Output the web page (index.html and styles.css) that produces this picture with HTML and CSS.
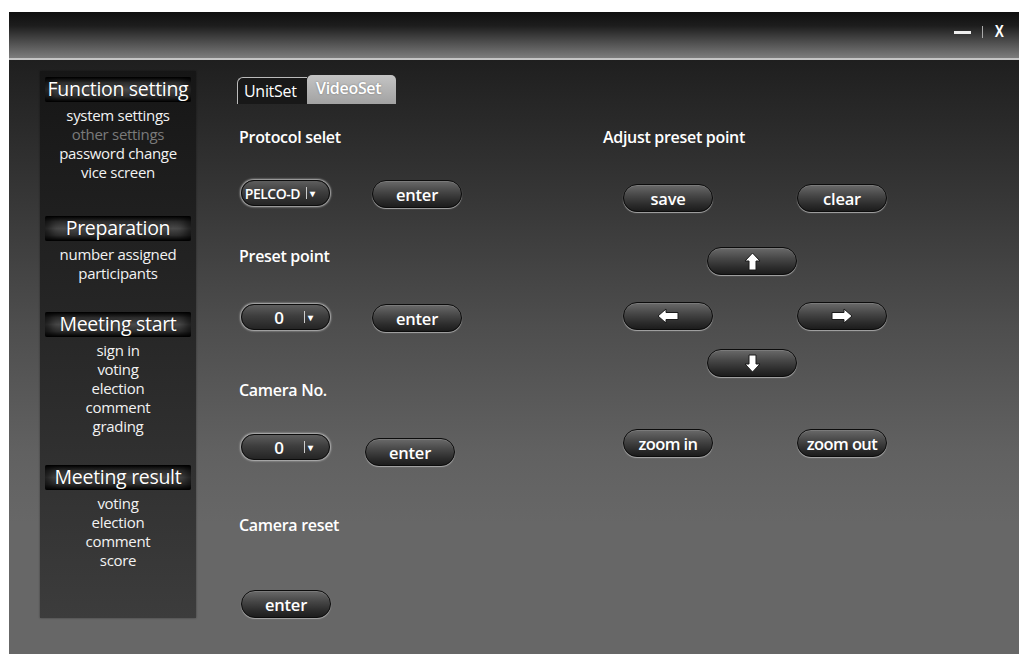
FILE: index.html
```html
<!DOCTYPE html>
<html lang="en">
<head>
  <meta charset="UTF-8" />
  <title>VideoSet</title>
  <link rel="stylesheet" href="styles.css">
</head>
<body>
  <div class="window">
    <div class="titlebar">
      <span class="tb-min"></span>
      <span class="tb-sep"></span>
      <span class="tb-close">X</span>
    </div>

    <div class="main">
      <nav class="sidebar">
        <div class="section">
          <div class="section-head">Function setting</div>
          <a href="#">system settings</a>
          <a href="#" class="disabled">other settings</a>
          <a href="#">password change</a>
          <a href="#">vice screen</a>
        </div>
        <div class="section s2">
          <div class="section-head">Preparation</div>
          <a href="#">number assigned</a>
          <a href="#">participants</a>
        </div>
        <div class="section s3">
          <div class="section-head">Meeting start</div>
          <a href="#">sign in</a>
          <a href="#">voting</a>
          <a href="#">election</a>
          <a href="#">comment</a>
          <a href="#">grading</a>
        </div>
        <div class="section s4">
          <div class="section-head">Meeting result</div>
          <a href="#">voting</a>
          <a href="#">election</a>
          <a href="#">comment</a>
          <a href="#">score</a>
        </div>
      </nav>

      <div class="content">
        <div class="tabs">
          <span class="tab">UnitSet</span>
          <span class="tab active">VideoSet</span>
        </div>

        <div class="columns">
          <div class="col-left">
            <div class="label">Protocol selet</div>
            <div class="row r1">
              <div class="select wide"><span class="val">PELCO-D</span><span class="bar"></span><span class="tri">&#9662;</span></div>
              <button class="btn">enter</button>
            </div>

            <div class="label l2">Preset point</div>
            <div class="row r2">
              <div class="select"><span class="val">0</span><span class="bar"></span><span class="tri">&#9662;</span></div>
              <button class="btn">enter</button>
            </div>

            <div class="label l3">Camera No.</div>
            <div class="row r3">
              <div class="select"><span class="val">0</span><span class="bar"></span><span class="tri">&#9662;</span></div>
              <button class="btn low">enter</button>
            </div>

            <div class="label l4">Camera reset</div>
            <div class="row r4">
              <button class="btn">enter</button>
            </div>
          </div>

          <div class="col-right">
            <div class="label">Adjust preset point</div>
            <div class="pad p1">
              <button class="btn">save</button>
              <button class="btn">clear</button>
            </div>
            <div class="pad p2 center">
              <button class="btn">
                <svg width="17" height="19" viewBox="0 0 17 19"><path d="M8.5 1 L16 9 L12 9 L12 18 L5 18 L5 9 L1 9 Z" fill="#fff" stroke="#1a1a1a" stroke-width="1"/></svg>
              </button>
            </div>
            <div class="pad p3">
              <button class="btn">
                <svg width="22" height="16" viewBox="0 0 22 16"><path d="M1 8 L9 1 L9 4.5 L21 4.5 L21 11.5 L9 11.5 L9 15 Z" fill="#fff" stroke="#1a1a1a" stroke-width="1"/></svg>
              </button>
              <button class="btn">
                <svg width="22" height="16" viewBox="0 0 22 16"><path d="M21 8 L13 1 L13 4.5 L1 4.5 L1 11.5 L13 11.5 L13 15 Z" fill="#fff" stroke="#1a1a1a" stroke-width="1"/></svg>
              </button>
            </div>
            <div class="pad p4 center">
              <button class="btn">
                <svg width="17" height="19" viewBox="0 0 17 19"><path d="M8.5 18 L16 10 L12 10 L12 1 L5 1 L5 10 L1 10 Z" fill="#fff" stroke="#1a1a1a" stroke-width="1"/></svg>
              </button>
            </div>
            <div class="pad p5">
              <button class="btn zoom">zoom in</button>
              <button class="btn zoom">zoom out</button>
            </div>
          </div>
        </div>
      </div>
    </div>
  </div>
</body>
</html>
```

FILE: styles.css
```css
body {
  margin: 0;
  background: #fff;
  font-family: "Open Sans", "Noto Sans", sans-serif;
  color: #fff;
}
.window {
  margin: 12px 11px 10px 9px;
  width: 1010px;
  height: 642px;
  display: flex;
  flex-direction: column;
  background: #676767;
}
.titlebar {
  height: 48px;
  border-bottom: 2px solid #c4c4c4;
  background: linear-gradient(#0f0f0f 0%, #1d1d1d 30%, #4d4d4d 65%, #7c7c7c 100%);
  display: flex;
  align-items: center;
  justify-content: flex-end;
  padding-right: 14px;
  padding-bottom: 6px;
  box-sizing: border-box;
}
.tb-min {
  width: 17px;
  height: 3px;
  background: #eee;
  margin-right: 11px;
}
.tb-sep {
  width: 1px;
  height: 12px;
  background: #aaa;
  margin-right: 11px;
}
.tb-close {
  font-family: "Liberation Sans", sans-serif;
  font-weight: bold;
  font-size: 16px;
  transform: scaleX(0.85);
}
.main {
  flex: 1;
  display: flex;
  padding: 11px 0 0 31px;
  background: linear-gradient(#1f1f1f 0%, #353535 22%, #4e4e4e 45%, #616161 66%, #676767 78%);
}
.sidebar {
  width: 156px;
  height: 547px;
  background: linear-gradient(#161616, #262626 45%, #3c3c3c);
  box-shadow: 0 0 2px rgba(0,0,0,.4);
  display: flex;
  flex-direction: column;
  align-items: center;
  padding-top: 6px;
  box-sizing: border-box;
}
.section {
  width: 100%;
  display: flex;
  flex-direction: column;
  align-items: center;
}
.s2 { margin-top: 34px; }
.s3 { margin-top: 29px; }
.s4 { margin-top: 29px; }
.section-head {
  width: 146px;
  height: 25px;
  line-height: 24px;
  text-align: center;
  font-size: 19.5px;
  margin-bottom: 4px;
  border-radius: 2px;
  background: linear-gradient(#000 0%, #2b2b2b 22%, #4a4a4a 50%, #2c2c2c 78%, #000 100%);
  box-shadow: inset 12px 0 10px -6px rgba(0,0,0,.6), inset -12px 0 10px -6px rgba(0,0,0,.6);
  text-shadow: 0 0 2px rgba(0,0,0,.6);
  letter-spacing: -0.3px;
  white-space: nowrap;
}
.sidebar a {
  color: #f2f2f2;
  text-decoration: none;
  font-size: 15px;
  line-height: 19px;
  letter-spacing: -0.3px;
}
.sidebar a.disabled {
  color: #7a7a7a;
}
.content {
  margin-left: 41px;
  width: 760px;
}
.tabs {
  display: flex;
  margin-top: 4px;
  height: 29px;
  align-items: flex-end;
}
.tab {
  height: 27px;
  line-height: 26px;
  font-size: 16px;
  padding: 0 6px;
  box-sizing: border-box;
  letter-spacing: -0.3px;
}
.tab:first-child {
  width: 70px;
  border: 1px solid #bbb;
  border-right: none;
  border-bottom: none;
  border-radius: 6px 0 0 0;
  background: #181818;
}
.tab.active {
  width: 89px;
  height: 29px;
  line-height: 27px;
  font-weight: 600;
  color: #fff;
  border-radius: 5px 5px 0 0;
  background: linear-gradient(#c4c4c4, #a2a2a2);
  text-shadow: 0 0 2px rgba(0,0,0,.35);
  padding-left: 9px;
}
.columns {
  display: flex;
}
.col-left {
  width: 364px;
  padding-left: 2px;
}
.label {
  font-size: 16px;
  font-weight: 600;
  line-height: 20px;
  letter-spacing: -0.3px;
}
.col-left > .label:first-child,
.col-right > .label:first-child { margin-top: 23px; }
.row {
  display: flex;
  align-items: flex-start;
  padding-left: 2px;
}
.r1 { margin-top: 33px; }
.r2 { margin-top: 38px; }
.r3 { margin-top: 34px; }
.r4 { margin-top: 55px; }
.l2 { margin-top: 38px; }
.l3 { margin-top: 48px; }
.l4 { margin-top: 49px; }
.r1 .btn, .r2 .btn { margin-left: 42px; }
.r3 .btn { margin-left: 35px; margin-top: 4px; }
.btn {
  width: 90px;
  height: 28px;
  border-radius: 14px;
  border: 1px solid #0c0c0c;
  background: linear-gradient(#6a6a6a 0%, #474747 40%, #2c2c2c 75%, #1c1c1c 100%);
  box-shadow: 0 1px 1px #a8a8a8, inset 0 1px 0 rgba(255,255,255,.12);
  color: #fff;
  font-family: "Open Sans", "Noto Sans", sans-serif;
  font-size: 16.5px;
  font-weight: 600;
  padding: 0;
  display: flex;
  align-items: center;
  justify-content: center;
  box-sizing: border-box;
  letter-spacing: -0.2px;
}
.btn.zoom {
  letter-spacing: -0.6px;
}
.select {
  width: 89px;
  height: 26px;
  border-radius: 13px;
  border: 1px solid #0c0c0c;
  background: linear-gradient(#5e5e5e 0%, #3e3e3e 45%, #242424 100%);
  box-shadow: 0 0 2px 1px #bdbdbd;
  display: flex;
  align-items: center;
  box-sizing: border-box;
  font-weight: 600;
}
.select .val {
  width: 74px;
  text-align: center;
  font-size: 17px;
}
.select.wide .val {
  width: 58px;
  font-size: 14px;
  letter-spacing: -0.5px;
  text-align: right;
}
.select .bar {
  width: 1px;
  height: 12px;
  background: #ccc;
  margin-left: -12px;
}
.select.wide .bar { margin-left: 6px; }
.select .tri {
  font-size: 10px;
  margin-left: 3px;
}
.col-right {
  width: 300px;
}
.pad {
  display: flex;
  padding-left: 20px;
  gap: 84px;
}
.pad.center { padding-left: 104px; }
.p1 { margin-top: 37px; }
.p2 { margin-top: 35px; }
.p3 { margin-top: 27px; }
.p4 { margin-top: 19px; }
.p5 { margin-top: 52px; }
.btn svg { display: block; }
```
